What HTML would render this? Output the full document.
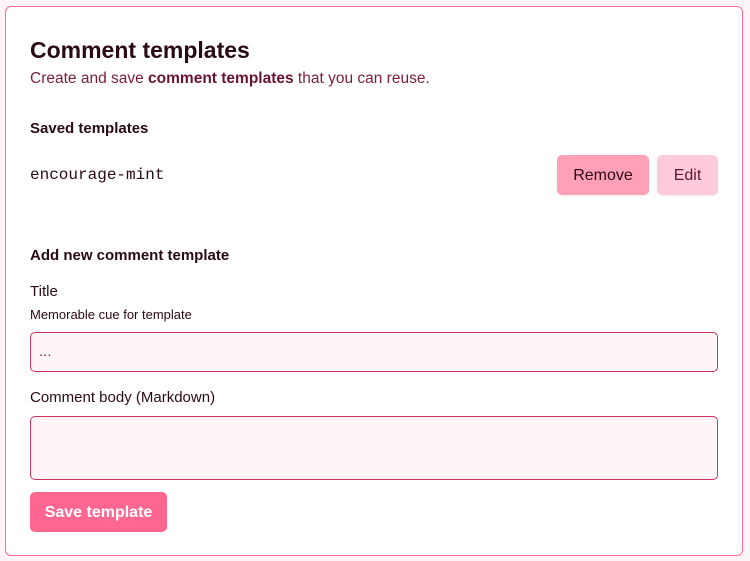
<!DOCTYPE html>
<html><head><style>
*{box-sizing:border-box;margin:0;padding:0}
body{width:750px;height:561px;background:#fff5f7;font-family:"Liberation Sans",sans-serif;color:#2a0a14;position:relative;overflow:hidden}
.card{position:absolute;left:5px;top:6px;width:738px;height:550px;background:#fff;border:1px solid #ff6b95;border-radius:6px}
.a{position:absolute;white-space:nowrap}
h1{font-size:23px;font-weight:bold;left:24px;top:30px}
.sub{left:24px;top:63px;font-size:15.5px;color:#7a1d3e}
.sub b{color:#6a1232}
.h{font-size:15px;font-weight:bold}
.mono{font-family:"Liberation Mono",monospace;font-size:16px;left:24px;top:159px}
.btn{position:absolute;border-radius:5px;font-size:16px;text-align:center;line-height:42px;height:40px;box-shadow:0 1px 2px rgba(0,0,0,.08)}
.in{position:absolute;left:24px;width:688px;background:#fff5f6;border:1px solid #c9355f;border-radius:5px}
</style></head><body>
<div class="card">
<h1 class="a">Comment templates</h1>
<div class="a sub">Create and save <b>comment templates</b> that you can reuse.</div>
<div class="a h" style="left:24px;top:113px">Saved templates</div>
<div class="a mono">encourage-mint</div>
<div class="btn" style="left:551px;top:148px;width:92px;background:#ffa0b8;color:#2a0a14">Remove</div>
<div class="btn" style="left:651px;top:148px;width:61px;background:#ffcbda;color:#6a1232">Edit</div>
<div class="a h" style="left:24px;top:240px">Add new comment template</div>
<div class="a" style="left:24px;top:276px;font-size:15px">Title</div>
<div class="a" style="left:24px;top:300px;font-size:13px">Memorable cue for template</div>
<div class="in" style="top:325px;height:40px"><span class="a" style="left:8px;top:10px;color:#a02050;font-size:15px">...</span></div>
<div class="a" style="left:24px;top:382px;font-size:15px">Comment body (Markdown)</div>
<div class="in" style="top:409px;height:64px"></div>
<div class="btn" style="left:24px;top:485px;width:137px;background:#ff6690;color:#fff;font-weight:bold;box-shadow:none">Save template</div>
</div>
</body></html>
